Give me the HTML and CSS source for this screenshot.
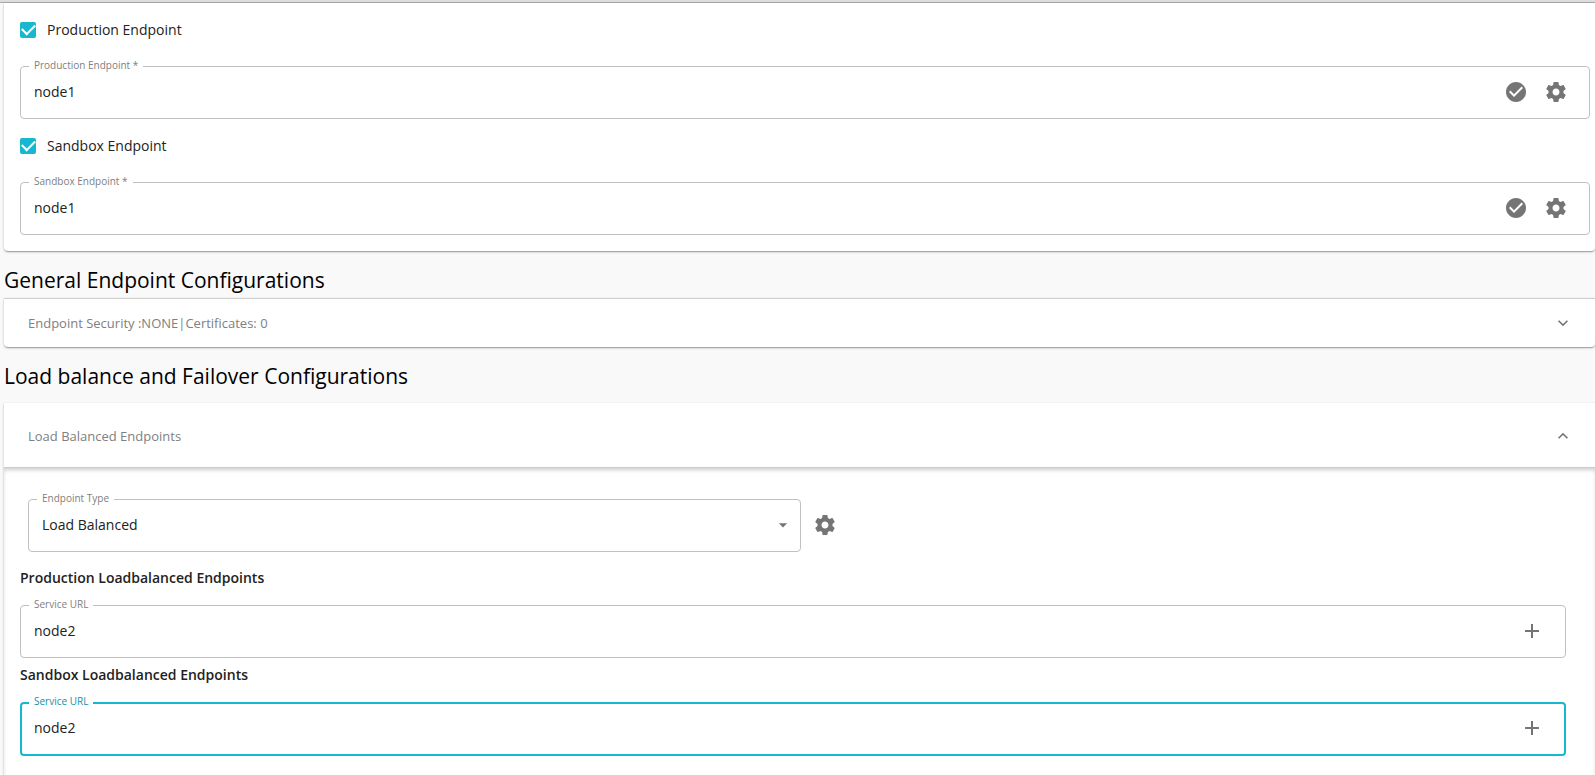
FILE: index.html
```
<!DOCTYPE html>
<html lang="en">
<head>
  <meta charset="utf-8">
  <title>Endpoints</title>
  <link rel="stylesheet" href="styles.css">
</head>
<body>
  <svg class="sprite" aria-hidden="true">
    <symbol id="check-circle" viewBox="0 0 24 24"><path d="M12 2C6.48 2 2 6.48 2 12s4.480 10 10 10 10-4.480 10-10S17.520 2 12 2zm-2 15l-5-5 1.410-1.410L10 14.170l7.590-7.590L19 8l-9 9z"/></symbol>
    <symbol id="settings" viewBox="0 0 24 24"><path d="M19.430 12.980c.04-.32.07-.64.07-.98s-.03-.66-.07-.98l2.110-1.650c.19-.15.24-.42.12-.64l-2-3.460c-.12-.22-.39-.3-.61-.22l-2.490 1c-.52-.4-1.080-.73-1.690-.98l-.38-2.650C14.460 2.180 14.250 2 14 2h-4c-.25 0-.46.18-.49.42l-.38 2.650c-.61.25-1.170.59-1.690.98l-2.490-1c-.23-.09-.49 0-.61.22l-2 3.460c-.13.22-.07.49.12.64l2.110 1.650c-.04.32-.07.65-.07.98s.03.66.07.98l-2.110 1.650c-.19.15-.24.42-.12.64l2 3.460c.12.22.39.3.61.22l2.490-1c.52.4 1.080.73 1.690.98l.38 2.650c.03.24.24.42.49.42h4c.25 0 .46-.18.49-.42l.38-2.650c.61-.25 1.170-.59 1.690-.98l2.490 1c.23.09.49 0 .61-.22l2-3.460c.12-.22.07-.49-.12-.64l-2.110-1.650zM12 15.500c-1.930 0-3.500-1.570-3.500-3.500s1.570-3.500 3.500-3.500 3.500 1.570 3.500 3.500-1.570 3.500-3.500 3.500z"/></symbol>
    <symbol id="expand-more" viewBox="0 0 24 24"><path d="M16.590 8.590L12 13.170 7.410 8.590 6 10l6 6 6-6z"/></symbol>
    <symbol id="expand-less" viewBox="0 0 24 24"><path d="M12 8l-6 6 1.410 1.410L12 10.830l4.590 4.580L18 14z"/></symbol>
    <symbol id="drop-down" viewBox="0 0 24 24"><path d="M7 10l5 5 5-5z"/></symbol>
    <symbol id="add" viewBox="0 0 24 24"><path d="M19 13h-6v6h-2v-6H5v-2h6V5h2v6h6v2z"/></symbol>
  </svg>

  <div class="top-strip"></div>

  <main class="page">
    <section class="panel endpoints">
      <label class="check-row">
        <input type="checkbox" checked>
        <span>Production Endpoint</span>
      </label>
      <fieldset class="field">
        <legend><label for="production">Production Endpoint *</label></legend>
        <div class="field-body">
          <input type="text" id="production" value="node1">
          <button class="icon-button" aria-label="Check status"><svg><use href="#check-circle"/></svg></button>
          <button class="icon-button" aria-label="Settings"><svg><use href="#settings"/></svg></button>
        </div>
      </fieldset>

      <label class="check-row">
        <input type="checkbox" checked>
        <span>Sandbox Endpoint</span>
      </label>
      <fieldset class="field">
        <legend><label for="sandbox">Sandbox Endpoint *</label></legend>
        <div class="field-body">
          <input type="text" id="sandbox" value="node1">
          <button class="icon-button" aria-label="Check status"><svg><use href="#check-circle"/></svg></button>
          <button class="icon-button" aria-label="Settings"><svg><use href="#settings"/></svg></button>
        </div>
      </fieldset>
    </section>

    <h2>General Endpoint Configurations</h2>
    <section class="panel general">
      <button class="summary" aria-expanded="false">
        <span>Endpoint Security :NONE|Certificates: 0</span>
        <svg><use href="#expand-more"/></svg>
      </button>
    </section>

    <h2 class="spaced">Load balance and Failover Configurations</h2>
    <section class="panel load-balance">
      <button class="summary expanded" aria-expanded="true">
        <span>Load Balanced Endpoints</span>
        <svg><use href="#expand-less"/></svg>
      </button>
      <div class="details">
        <div class="type-row">
          <fieldset class="field">
            <legend><label for="endpointType">Endpoint Type</label></legend>
            <div class="field-body select-body">
              <select id="endpointType">
                <option>Failover</option>
                <option selected>Load Balanced</option>
              </select>
              <svg><use href="#drop-down"/></svg>
            </div>
          </fieldset>
          <button class="icon-button" aria-label="Load balance settings"><svg><use href="#settings"/></svg></button>
        </div>

        <h3>Production Loadbalanced Endpoints</h3>
        <fieldset class="field">
          <legend><label for="productionUrl">Service URL</label></legend>
          <div class="field-body">
            <input type="text" id="productionUrl" value="node2">
            <button class="icon-button" aria-label="Add"><svg><use href="#add"/></svg></button>
          </div>
        </fieldset>

        <h3>Sandbox Loadbalanced Endpoints</h3>
        <fieldset class="field focused">
          <legend><label for="sandboxUrl">Service URL</label></legend>
          <div class="field-body">
            <input type="text" id="sandboxUrl" value="node2">
            <button class="icon-button" aria-label="Add"><svg><use href="#add"/></svg></button>
          </div>
        </fieldset>
      </div>
    </section>
  </main>
</body>
</html>
```
FILE: styles.css
```
* {
  box-sizing: border-box;
}
body {
  margin: 0;
  min-height: 100vh;
  display: flex;
  flex-direction: column;
  background-color: #f9f9f9;
  color: #222;
  font-family: "Open Sans", sans-serif;
  font-size: 14px;
  line-height: 20px;
}
button,
input,
select {
  font: inherit;
  color: inherit;
}
svg {
  fill: #757575;
}
.sprite {
  display: none;
}
.top-strip {
  height: 3px;
  background-color: #ddd;
  border-bottom: 1px solid #aaa;
}
.page {
  flex-grow: 1;
  display: flex;
  flex-direction: column;
  padding-left: 4px;
}
.panel {
  background-color: #fff;
  border-radius: 0 0 4px 4px;
  box-shadow: 0 1px 3px rgba(0, 0, 0, 0.2), 0 1px 1px rgba(0, 0, 0, 0.14), 0 2px 1px -1px rgba(0, 0, 0, 0.12);
}
.endpoints {
  padding: 6px 5px 10px 16px;
}
.general {
  border-top: 1px solid #d0d0d0;
}
h2 {
  margin: 14px 0 3px;
  color: #000;
  font-size: 21px;
  font-weight: 400;
  line-height: 30px;
}
h2.spaced {
  margin: 14px 0 12px;
}
h3 {
  margin: 0;
  font-size: 14px;
  font-weight: 600;
  line-height: 20px;
}

/* checkbox rows */
.check-row {
  display: flex;
  align-items: center;
  height: 42px;
  gap: 11px;
}
.check-row input {
  appearance: none;
  width: 16px;
  height: 16px;
  margin: 0;
  border: 2px solid #757575;
  border-radius: 2px;
  display: grid;
  place-items: center;
}
.check-row input:checked {
  border: none;
  background-color: #15b8cf;
}
.check-row input:checked:before {
  content: "";
  width: 11px;
  height: 6px;
  margin-bottom: 4px;
  border: solid #fff;
  border-width: 0 0 2px 2px;
  transform: rotate(-45deg);
}

/* outlined fields */
.field {
  min-width: 0;
  margin: 0;
  padding: 0;
  border: 1px solid #c0c0c0;
  border-radius: 4px;
}
.endpoints .field {
  margin: 14px 0 6px;
}
.field legend {
  margin-left: 8px;
  padding: 0 5px 2px;
  color: #808080;
  font-size: 10px;
  line-height: 1px;
}
.field-body {
  display: flex;
  align-items: center;
  gap: 16px;
  height: 50px;
  padding: 0 21px 2px 13px;
}
.field-body input,
.field-body select {
  flex-grow: 1;
  min-width: 0;
  padding: 0;
  border: none;
  outline: none;
  background: none;
}
.field.focused {
  border: 2px solid #15b8cf;
}
.focused legend {
  margin-left: 7px;
  color: #1590a4;
}
.focused .field-body {
  padding: 0 20px 2px 12px;
}
.icon-button {
  flex-shrink: 0;
  padding: 0;
  border: none;
  background-color: transparent;
  cursor: pointer;
}
.icon-button svg {
  display: block;
  width: 24px;
  height: 24px;
}
.select-body {
  position: relative;
  padding: 0 0 2px;
}
.select-body select {
  appearance: none;
  height: 100%;
  padding: 0 32px 0 13px;
}
.select-body svg {
  position: absolute;
  right: 7px;
  width: 20px;
  height: 20px;
  pointer-events: none;
}

/* accordion */
.summary {
  display: flex;
  align-items: center;
  justify-content: space-between;
  width: 100%;
  height: 48px;
  padding: 0 22px 0 24px;
  border: none;
  background: none;
  color: #808080;
  font-size: 13px;
  cursor: pointer;
}
.summary svg {
  width: 20px;
  height: 20px;
}
.summary.expanded {
  height: 65px;
}
.load-balance {
  flex-grow: 1;
}
.details {
  padding: 30px 29px 19px 16px;
  box-shadow: 0 -1px 0 #ccc, inset 0 3px 4px -1px rgba(0, 0, 0, 0.2);
}
.type-row {
  display: flex;
  align-items: center;
  gap: 12px;
  margin-bottom: 16px;
}
.type-row .field {
  width: 50%;
  margin-left: 8px;
}
.details h3 + .field {
  margin: 16px 0 7px;
}
```
